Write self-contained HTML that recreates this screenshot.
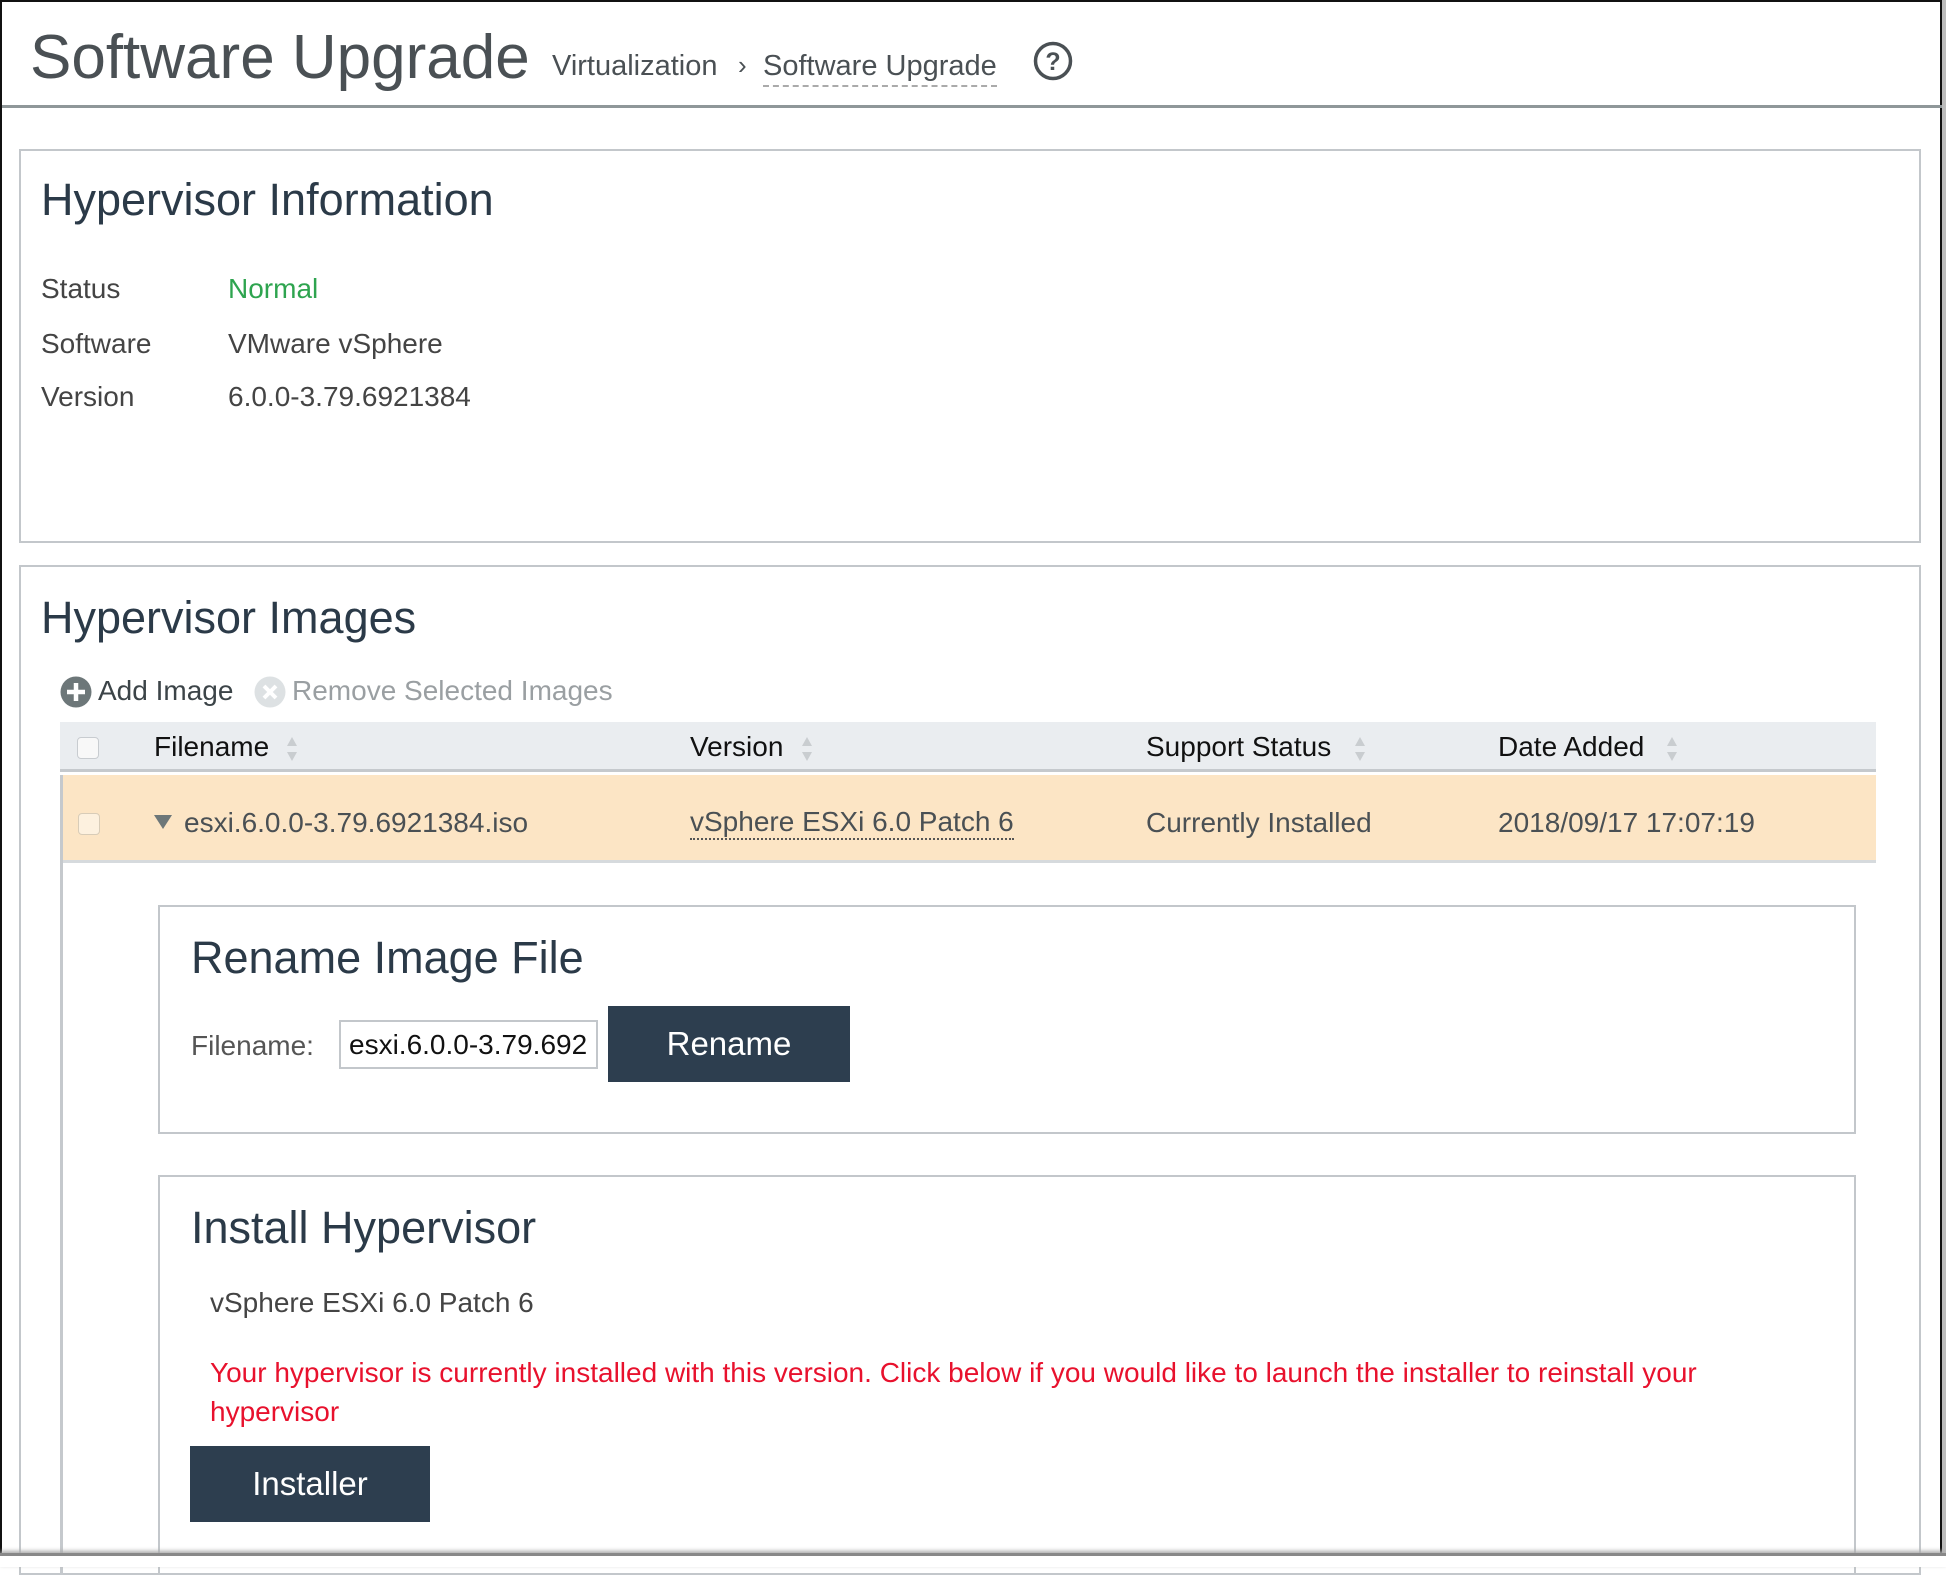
<!DOCTYPE html>
<html><head><meta charset="utf-8"><style>
*{margin:0;padding:0;box-sizing:border-box}
body{width:1946px;height:1567px;background:#fff;position:relative;overflow:hidden;font-family:"Liberation Sans",sans-serif;color:#444}
.a{position:absolute;white-space:nowrap}
.panel{position:absolute;border:2px solid #c3c7cb;background:#fff}
.h2{font-size:45px;color:#2b3a48}
.t{font-size:28px;line-height:34px}
.btn{position:absolute;background:#2d3e4f;color:#fff;font-size:33px;text-align:center}
.cb{position:absolute;width:22px;height:22px;border:1px solid #c8ccd0;border-radius:4px;background:#f8f8f8}
.sort{position:absolute;width:10px;height:26px}
</style></head><body>
<div class="a" style="left:0;top:0;width:1942px;height:1553px;border:2px solid #111;border-bottom:none"></div>
<div class="a" style="left:0;top:1553px;width:1946px;height:14px;background:linear-gradient(#999,#fff)"></div>
<div class="a" style="left:1942px;top:0;width:4px;height:1556px;background:#bbb"></div>

<div class="a" style="left:30px;top:20px;font-size:62px;color:#4a5054;line-height:76px">Software Upgrade</div>
<div class="a" style="left:552px;top:50px;font-size:29px;color:#4a5054">Virtualization</div>
<div class="a" style="left:738px;top:50px;font-size:26px;color:#4a5054">›</div>
<div class="a" style="left:763px;top:50px;font-size:29px;color:#4a5054;border-bottom:2px dashed #aaa;padding-bottom:2px">Software Upgrade</div>
<svg class="a" style="left:1032px;top:40px" width="42" height="42"><circle cx="21" cy="21" r="17.5" fill="none" stroke="#4a5054" stroke-width="3.5"/><text x="21" y="30" text-anchor="middle" font-family="Liberation Sans" font-size="25" font-weight="bold" fill="#4a5054">?</text></svg>
<div class="a" style="left:2px;top:105px;width:1940px;height:3px;background:#8f9799"></div>

<div class="panel" style="left:19px;top:149px;width:1902px;height:394px"></div>
<div class="a h2" style="left:41px;top:174px">Hypervisor Information</div>
<div class="a t" style="left:41px;top:272px">Status</div><div class="a t" style="left:228px;top:272px;color:#2ea44f">Normal</div>
<div class="a t" style="left:41px;top:327px">Software</div><div class="a t" style="left:228px;top:327px">VMware vSphere</div>
<div class="a t" style="left:41px;top:380px">Version</div><div class="a t" style="left:228px;top:380px">6.0.0-3.79.6921384</div>

<div class="panel" style="left:19px;top:565px;width:1902px;height:1010px"></div>
<div class="a h2" style="left:41px;top:592px">Hypervisor Images</div>
<svg class="a" style="left:60px;top:676px" width="32" height="32"><circle cx="16" cy="16" r="15.5" fill="#6d7779"/><path d="M16 7v18M7 16h18" stroke="#fff" stroke-width="4.5"/></svg>
<div class="a t" style="left:98px;top:674px;color:#3c4448">Add Image</div>
<svg class="a" style="left:254px;top:676px" width="32" height="32"><circle cx="16" cy="16" r="15.5" fill="#dde1e3"/><path d="M10 10l12 12M22 10l-12 12" stroke="#fff" stroke-width="4"/></svg>
<div class="a t" style="left:292px;top:674px;color:#9a9fa2">Remove Selected Images</div>

<div class="a" style="left:60px;top:722px;width:1816px;height:50px;background:#eaedf0;border-bottom:3px solid #c5c9cd"></div>
<div class="cb" style="left:77px;top:737px"></div>
<div class="a t" style="left:154px;top:730px;color:#111">Filename</div>
<div class="a t" style="left:690px;top:730px;color:#111">Version</div>
<div class="a t" style="left:1146px;top:730px;color:#111">Support Status</div>
<div class="a t" style="left:1498px;top:730px;color:#111">Date Added</div>
<svg class="a" style="left:285px;top:735px" width="14" height="28"><path d="M7 2l5 9H2zM7 26l5-9H2z" fill="#c9cdd0"/></svg>
<svg class="a" style="left:800px;top:735px" width="14" height="28"><path d="M7 2l5 9H2zM7 26l5-9H2z" fill="#c9cdd0"/></svg>
<svg class="a" style="left:1353px;top:735px" width="14" height="28"><path d="M7 2l5 9H2zM7 26l5-9H2z" fill="#c9cdd0"/></svg>
<svg class="a" style="left:1665px;top:735px" width="14" height="28"><path d="M7 2l5 9H2zM7 26l5-9H2z" fill="#c9cdd0"/></svg>

<div class="a" style="left:60px;top:775px;width:1816px;height:88px;background:#fce5c5;border-bottom:3px solid #d6dadd"></div>
<div class="a" style="left:60px;top:775px;width:3px;height:800px;background:#c5c9cd"></div>
<div class="cb" style="left:78px;top:813px;background:#fdf1df;border-color:#d8ccb8"></div>
<svg class="a" style="left:153px;top:814px" width="20" height="16"><path d="M1 1h18L10 15z" fill="#6d7779"/></svg>
<div class="a t" style="left:184px;top:806px;color:#4a5054">esxi.6.0.0-3.79.6921384.iso</div>
<div class="a t" style="left:690px;top:806px;color:#4a5054;border-bottom:2px dotted #555;line-height:32px">vSphere ESXi 6.0 Patch 6</div>
<div class="a t" style="left:1146px;top:806px;color:#4a5054">Currently Installed</div>
<div class="a t" style="left:1498px;top:806px;color:#4a5054">2018/09/17 17:07:19</div>

<div class="panel" style="left:158px;top:905px;width:1698px;height:229px"></div>
<div class="a h2" style="left:191px;top:932px">Rename Image File</div>
<div class="a t" style="left:191px;top:1029px;color:#555">Filename:</div>
<div class="a" style="left:339px;top:1020px;width:259px;height:49px;border:2px solid #c3c7cb;font-size:28px;line-height:45px;padding-left:8px;overflow:hidden;color:#111">esxi.6.0.0-3.79.692</div>
<div class="btn" style="left:608px;top:1006px;width:242px;height:76px;line-height:76px">Rename</div>

<div class="panel" style="left:158px;top:1175px;width:1698px;height:400px"></div>
<div class="a h2" style="left:191px;top:1202px">Install Hypervisor</div>
<div class="a t" style="left:210px;top:1286px">vSphere ESXi 6.0 Patch 6</div>
<div class="a t" style="left:210px;top:1353px;color:#e8112d;line-height:39px;white-space:normal;width:1620px">Your hypervisor is currently installed with this version. Click below if you would like to launch the installer to reinstall your hypervisor</div>
<div class="btn" style="left:190px;top:1446px;width:240px;height:76px;line-height:76px">Installer</div>

<div class="a" style="left:0;top:1553px;width:1946px;height:14px;background:#fff;border-top:3px solid #888;box-shadow:0 -2px 4px #aaa"></div>
</body></html>
